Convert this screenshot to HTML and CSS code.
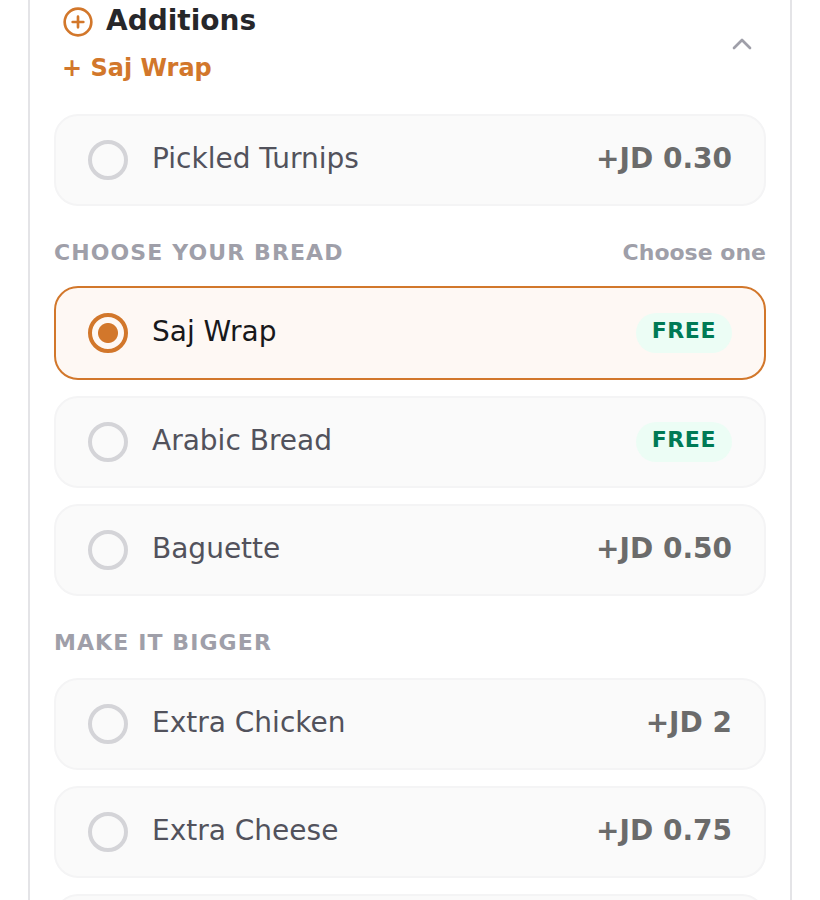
FILE: index.html
```
<!DOCTYPE html>
<html lang="en">
<head>
<meta charset="UTF-8">
<meta name="viewport" content="width=device-width, initial-scale=1.0">
<title>Additions</title>
<link rel="stylesheet" href="styles.css">
</head>
<body>

<form class="panel">
  <button type="button" class="panel-header" aria-expanded="true">
    <span class="header-text">
      <span class="header-title">
        <svg class="icon accent" viewBox="0 0 24 24" aria-hidden="true">
          <circle cx="12" cy="12" r="10"/>
          <path d="M8 12h8M12 8v8"/>
        </svg>
        <span class="title">Additions</span>
      </span>
      <span class="header-summary">+ Saj Wrap</span>
    </span>
    <svg class="icon chevron" viewBox="0 0 24 24" aria-hidden="true">
      <path d="m18 15-6-6-6 6"/>
    </svg>
  </button>

  <div class="options">
    <label class="option">
      <input type="checkbox" name="extra" value="turnips">
      <span class="name">Pickled Turnips</span>
      <span class="price">+JD 0.30</span>
    </label>
  </div>

  <div class="group-head">
    <h2>Choose your bread</h2>
    <span class="hint">Choose one</span>
  </div>
  <div class="options">
    <label class="option selected">
      <input type="radio" name="bread" value="saj" checked>
      <span class="name">Saj Wrap</span>
      <span class="free">FREE</span>
    </label>
    <label class="option">
      <input type="radio" name="bread" value="arabic">
      <span class="name">Arabic Bread</span>
      <span class="free">FREE</span>
    </label>
    <label class="option">
      <input type="radio" name="bread" value="baguette">
      <span class="name">Baguette</span>
      <span class="price">+JD 0.50</span>
    </label>
  </div>

  <div class="group-head no-hint">
    <h2>Make it bigger</h2>
  </div>
  <div class="options">
    <label class="option">
      <input type="checkbox" name="extra" value="chicken">
      <span class="name">Extra Chicken</span>
      <span class="price">+JD 2</span>
    </label>
    <label class="option">
      <input type="checkbox" name="extra" value="cheese">
      <span class="name">Extra Cheese</span>
      <span class="price">+JD 0.75</span>
    </label>
    <label class="option">
      <input type="checkbox" name="extra" value="fries" aria-label="Extra Fries">
    </label>
  </div>
</form>

</body>
</html>
```
FILE: styles.css
```
* {
  box-sizing: border-box;
}

body {
  height: 100vh;
  margin: 0;
  padding: 0 28px;
  overflow: hidden;
  background: #fff;
  font-family: "DejaVu Sans", sans-serif;
}

.panel {
  padding: 0 24px 24px;
  border: solid #e4e4e7;
  border-width: 0 2px;
}

.panel-header {
  display: flex;
  align-items: center;
  justify-content: space-between;
  width: 100%;
  padding: 2px 8px 28px;
  border: none;
  background: none;
  font: inherit;
  text-align: left;
  cursor: pointer;
}

.header-text {
  display: flex;
  flex-direction: column;
  gap: 8px;
}

.header-title {
  display: flex;
  align-items: center;
  gap: 12px;
  color: #27272a;
  font-size: 28px;
  font-weight: bold;
  line-height: 38px;
}

.header-summary {
  color: #d2772b;
  font-size: 24px;
  font-weight: bold;
  line-height: 36px;
}

.icon {
  flex: none;
  width: 32px;
  height: 32px;
  fill: none;
  stroke: currentColor;
  stroke-width: 2;
  stroke-linecap: round;
  stroke-linejoin: round;
}

.accent {
  color: #d2772b;
}

.chevron {
  color: #9f9fa9;
}

.options {
  display: grid;
  gap: 16px;
}

.option {
  display: flex;
  align-items: center;
  gap: 24px;
  min-height: 92px;
  padding: 0 32px;
  border: 2px solid #f4f4f5;
  border-radius: 24px;
  background: #fafafa;
  color: #52525c;
  font-size: 28px;
  line-height: 40px;
  cursor: pointer;
}

.option.selected {
  min-height: 94px;
  border-color: #d2772b;
  background: #fef8f4;
  color: #18181b;
}

.option input {
  appearance: none;
  flex: none;
  width: 40px;
  height: 40px;
  margin: 0;
  border: 4px solid #d4d4d8;
  border-radius: 50%;
}

.option input:checked {
  border-color: #d2772b;
  background: radial-gradient(circle, #d2772b 9.5px, transparent 10.5px);
}

.title,
.name,
.price {
  padding-bottom: 2px;
}

.name {
  flex: 1;
}

.price {
  color: #6b6b6b;
  font-weight: bold;
}

.free {
  padding: 0 16px 4px;
  border-radius: 20px;
  background: #ecfdf5;
  color: #007a55;
  font-size: 22px;
  font-weight: bold;
  letter-spacing: 0.025em;
  line-height: 36px;
}

.group-head {
  display: flex;
  align-items: center;
  justify-content: space-between;
  padding: 30px 0 16px;
  color: #9f9fa9;
  font-size: 22px;
  font-weight: bold;
  line-height: 34px;
}

.group-head.no-hint {
  padding-bottom: 18px;
}

.group-head h2 {
  margin: 0;
  font-size: 22px;
  letter-spacing: 0.05em;
  text-transform: uppercase;
}
```
